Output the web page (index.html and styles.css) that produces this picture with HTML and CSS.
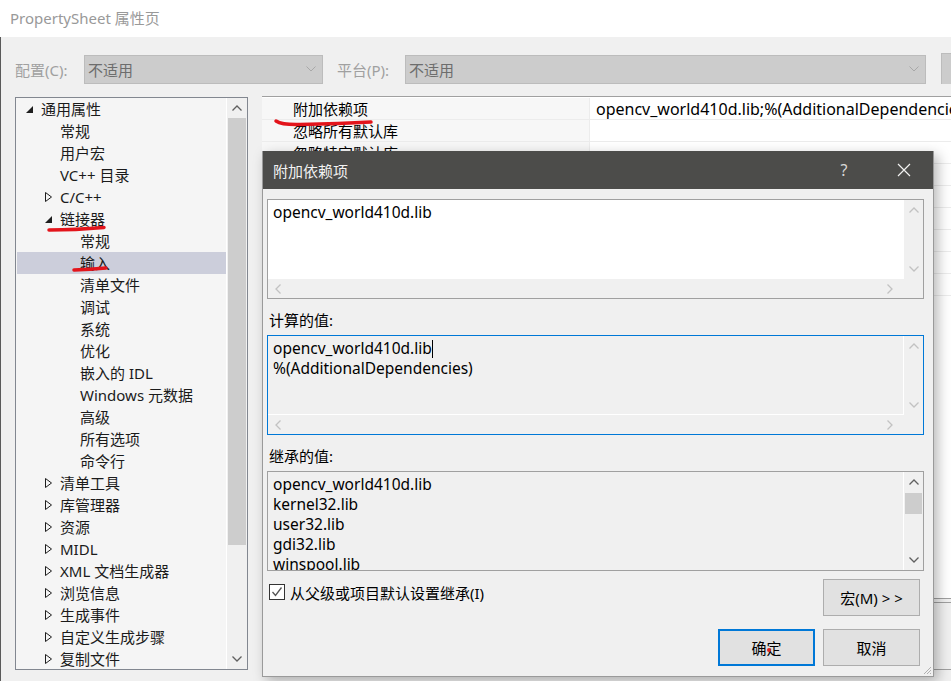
FILE: index.html
```html
<!DOCTYPE html>
<html lang="zh-CN">
  <head>
    <meta charset="UTF-8" />
    <meta name="viewport" content="width=device-width, initial-scale=1.0" />
    <title>PropertySheet 属性页</title>
    <link rel="stylesheet" href="styles.css">
  </head>
  <body>
    <div class="titlebar">PropertySheet 属性页</div>

    <div class="window">
      <div class="toolbar">
        <span class="label label-config">配置(C):</span>
        <div class="combo combo-config">
          <span>不适用</span>
          <svg class="chev" width="10" height="6"><polyline points="0.5,0.5 5,5 9.5,0.5" /></svg>
        </div>
        <span class="label label-platform">平台(P):</span>
        <div class="combo combo-platform">
          <span>不适用</span>
          <svg class="chev" width="10" height="6"><polyline points="0.5,0.5 5,5 9.5,0.5" /></svg>
        </div>
        <div class="manager-button"></div>
      </div>

      <div class="main">
        <div class="tree">
          <div class="tree-items">
            <div class="node l0"><span class="twist"><svg width="7" height="7"><path class="open" d="M7 0V7H0Z" /></svg></span>通用属性</div>
            <div class="node l1"><span class="twist"></span>常规</div>
            <div class="node l1"><span class="twist"></span>用户宏</div>
            <div class="node l1"><span class="twist"></span>VC++ 目录</div>
            <div class="node l1"><span class="twist"><svg width="7" height="10"><path class="shut" d="M0.5 0.5L6.5 5L0.5 9.5Z" /></svg></span>C/C++</div>
            <div class="node l1"><span class="twist"><svg width="7" height="7"><path class="open" d="M7 0V7H0Z" /></svg></span>链接器</div>
            <div class="node l2"><span class="twist"></span>常规</div>
            <div class="node l2 selected"><span class="twist"></span>输入</div>
            <div class="node l2"><span class="twist"></span>清单文件</div>
            <div class="node l2"><span class="twist"></span>调试</div>
            <div class="node l2"><span class="twist"></span>系统</div>
            <div class="node l2"><span class="twist"></span>优化</div>
            <div class="node l2"><span class="twist"></span>嵌入的 IDL</div>
            <div class="node l2"><span class="twist"></span>Windows 元数据</div>
            <div class="node l2"><span class="twist"></span>高级</div>
            <div class="node l2"><span class="twist"></span>所有选项</div>
            <div class="node l2"><span class="twist"></span>命令行</div>
            <div class="node l1"><span class="twist"><svg width="7" height="10"><path class="shut" d="M0.5 0.5L6.5 5L0.5 9.5Z" /></svg></span>清单工具</div>
            <div class="node l1"><span class="twist"><svg width="7" height="10"><path class="shut" d="M0.5 0.5L6.5 5L0.5 9.5Z" /></svg></span>库管理器</div>
            <div class="node l1"><span class="twist"><svg width="7" height="10"><path class="shut" d="M0.5 0.5L6.5 5L0.5 9.5Z" /></svg></span>资源</div>
            <div class="node l1"><span class="twist"><svg width="7" height="10"><path class="shut" d="M0.5 0.5L6.5 5L0.5 9.5Z" /></svg></span>MIDL</div>
            <div class="node l1"><span class="twist"><svg width="7" height="10"><path class="shut" d="M0.5 0.5L6.5 5L0.5 9.5Z" /></svg></span>XML 文档生成器</div>
            <div class="node l1"><span class="twist"><svg width="7" height="10"><path class="shut" d="M0.5 0.5L6.5 5L0.5 9.5Z" /></svg></span>浏览信息</div>
            <div class="node l1"><span class="twist"><svg width="7" height="10"><path class="shut" d="M0.5 0.5L6.5 5L0.5 9.5Z" /></svg></span>生成事件</div>
            <div class="node l1"><span class="twist"><svg width="7" height="10"><path class="shut" d="M0.5 0.5L6.5 5L0.5 9.5Z" /></svg></span>自定义生成步骤</div>
            <div class="node l1"><span class="twist"><svg width="7" height="10"><path class="shut" d="M0.5 0.5L6.5 5L0.5 9.5Z" /></svg></span>复制文件</div>
          </div>
          <div class="vscroll">
            <div class="sb-cell"><svg class="arrow dark" width="10" height="6"><polyline points="0.5,5.5 5,1 9.5,5.5" /></svg></div>
            <div class="sb-thumb tree-thumb"></div>
            <div class="sb-track"></div>
            <div class="sb-cell"><svg class="arrow dark" width="10" height="6"><polyline points="0.5,0.5 5,5 9.5,0.5" /></svg></div>
          </div>
        </div>

        <div class="grid">
          <div class="rows">
            <div class="row"><div class="pname">附加依赖项</div><div class="pval">opencv_world410d.lib;%(AdditionalDependencies)</div></div>
            <div class="row"><div class="pname">忽略所有默认库</div><div class="pval"></div></div>
            <div class="row"><div class="pname">忽略特定默认库</div><div class="pval"></div></div>
            <div class="row"><div class="pname">模块定义文件</div><div class="pval"></div></div>
            <div class="row"><div class="pname">将模块添加到程序集</div><div class="pval"></div></div>
            <div class="row"><div class="pname">嵌入托管资源文件</div><div class="pval"></div></div>
            <div class="row"><div class="pname">强制符号引用</div><div class="pval"></div></div>
            <div class="row"><div class="pname">延迟加载的 DLL</div><div class="pval"></div></div>
            <div class="row"><div class="pname">程序集链接资源</div><div class="pval"></div></div>
          </div>
          <div class="desc"></div>
        </div>
      </div>
    </div>

    <div class="dialog">
      <div class="dlg-title">
        <span class="dlg-caption">附加依赖项</span>
        <span class="dlg-help">?</span>
        <span class="dlg-close">
          <svg width="14" height="14"><path d="M1 1L13 13M13 1L1 13" /></svg>
        </span>
      </div>
      <div class="dlg-body">
        <div class="field editable">
          <div class="text">opencv_world410d.lib</div>
          <div class="vbar">
            <div class="sb-cell"><svg class="arrow" width="10" height="6"><polyline points="0.5,5.5 5,1 9.5,5.5" /></svg></div>
            <div class="sb-cell"><svg class="arrow" width="10" height="6"><polyline points="0.5,0.5 5,5 9.5,0.5" /></svg></div>
          </div>
          <div class="hbar">
            <div class="sb-hcell"><svg class="arrow" width="6" height="10"><polyline points="5.5,0.5 1,5 5.5,9.5" /></svg></div>
            <div class="sb-hcell"><svg class="arrow" width="6" height="10"><polyline points="0.5,0.5 5,5 0.5,9.5" /></svg></div>
          </div>
          <div class="corner"></div>
        </div>

        <div class="flabel">计算的值:</div>
        <div class="field readonly focused">
          <div class="text">opencv_world410d.lib<span class="caret"></span>
%(AdditionalDependencies)</div>
          <div class="vbar">
            <div class="sb-cell"><svg class="arrow" width="10" height="6"><polyline points="0.5,5.5 5,1 9.5,5.5" /></svg></div>
            <div class="sb-cell"><svg class="arrow" width="10" height="6"><polyline points="0.5,0.5 5,5 9.5,0.5" /></svg></div>
          </div>
          <div class="hbar">
            <div class="sb-hcell"><svg class="arrow" width="6" height="10"><polyline points="5.5,0.5 1,5 5.5,9.5" /></svg></div>
            <div class="sb-hcell"><svg class="arrow" width="6" height="10"><polyline points="0.5,0.5 5,5 0.5,9.5" /></svg></div>
          </div>
          <div class="corner"></div>
        </div>

        <div class="flabel">继承的值:</div>
        <div class="field readonly list">
          <div class="text">opencv_world410d.lib
kernel32.lib
user32.lib
gdi32.lib
winspool.lib
comdlg32.lib</div>
          <div class="vbar">
            <div class="sb-cell"><svg class="arrow dark" width="10" height="6"><polyline points="0.5,5.5 5,1 9.5,5.5" /></svg></div>
            <div class="sb-thumb list-thumb"></div>
            <div class="sb-track"></div>
            <div class="sb-cell"><svg class="arrow dark" width="10" height="6"><polyline points="0.5,0.5 5,5 9.5,0.5" /></svg></div>
          </div>
        </div>

        <div class="footer-row">
          <div class="inherit">
            <span class="check"><svg width="14" height="14"><polyline points="2.5,7 5.5,10.5 11.5,2.5" /></svg></span>
            <span>从父级或项目默认设置继承(I)</span>
          </div>
          <div class="btn">宏(M) &gt; &gt;</div>
        </div>
        <div class="footer-row buttons">
          <div class="btn default">确定<span class="dot"></span></div>
          <div class="btn">取消</div>
        </div>
      </div>
      <svg class="grip" width="10" height="10">
        <path d="M9 2L2 9M9 5L5 9M9 8L8 9" />
      </svg>
    </div>

    <!-- hand drawn red marks on top of the screenshot -->
    <svg class="marks" width="951" height="681">
      <path d="M49 230Q75 230 104 227.5" />
      <path d="M74 270Q90 269.5 106 268" />
      <path d="M276 121Q282 125 300 124.5Q340 123.5 371 122" />
    </svg>
  </body>
</html>
```

FILE: styles.css
```css
* {
  box-sizing: border-box;
}
body {
  margin: 0;
  width: 951px;
  height: 681px;
  overflow: hidden;
  position: relative;
  background: #f0f0f0;
  font-family: "Noto Sans", "Noto Sans CJK SC", sans-serif;
  font-size: 15px;
  color: #000;
}

.titlebar {
  height: 37px;
  background: #fff;
  padding-left: 10px;
  line-height: 36px;
  color: #999;
}

.window {
  height: 644px;
  border-left: 1px solid #5a5a5a;
}

/* config / platform bar */
.toolbar {
  display: flex;
  align-items: center;
  height: 47px;
  padding: 18px 0 0 14px;
  overflow: hidden;
}
.toolbar > * {
  flex-shrink: 0;
}
.label {
  color: #a0a0a0;
  line-height: 20px;
}
.label-config {
  width: 69px;
}
.label-platform {
  width: 68px;
  margin-left: 14px;
}
.combo {
  height: 29px;
  background: #cccccc;
  border: 1px solid #bcbcbc;
  display: flex;
  align-items: center;
  justify-content: space-between;
  padding: 0 6px 1px 3px;
  color: #6d6d6d;
}
.combo-config {
  width: 239px;
}
.combo-platform {
  width: 521px;
}
.chev polyline {
  fill: none;
  stroke: #a8a8a8;
  stroke-width: 1;
}
.manager-button {
  width: 30px;
  height: 33px;
  margin-left: 15px;
  background: #cccccc;
  border: 1px solid #bcbcbc;
}

.main {
  display: flex;
  align-items: flex-start;
  padding: 12px 0 0 14px;
}

/* tree */
.tree {
  width: 233px;
  height: 573px;
  margin-top: 1px;
  border: 1px solid #828790;
  background: #f5f5f5;
  display: flex;
  flex-shrink: 0;
}
.tree-items {
  flex: 1;
  padding-left: 1px;
  overflow: hidden;
}
.node {
  height: 22px;
  line-height: 22px;
  display: flex;
  align-items: center;
  white-space: nowrap;
  color: #1b1b1b;
}
.node.selected {
  background: #cccedb;
}
.twist {
  width: 15px;
  flex-shrink: 0;
  display: flex;
  align-items: center;
}
.twist svg {
  display: block;
}
.twist .open {
  fill: #1e1e1e;
}
.twist .shut {
  fill: none;
  stroke: #1e1e1e;
  stroke-width: 1;
}
.l0 {
  padding-left: 9px;
}
.l1 {
  padding-left: 28px;
}
.l2 {
  padding-left: 48px;
}

.vscroll {
  width: 21px;
  border-left: 1px solid #fff;
  background: #f0f0f0;
  display: flex;
  flex-direction: column;
}
.sb-cell {
  height: 20px;
  flex-shrink: 0;
  display: flex;
  align-items: center;
  justify-content: center;
}
.sb-thumb {
  background: #cdcdcd;
  margin: 0 1px;
  flex-shrink: 0;
}
.tree-thumb {
  height: 427px;
}
.sb-track {
  flex: 1;
}
.arrow polyline {
  fill: none;
  stroke: #c2c2c2;
  stroke-width: 1.3;
}
.arrow.dark polyline {
  stroke: #606060;
}

/* property grid */
.grid {
  flex: 1;
  margin-left: 14px;
  height: 574px;
  display: flex;
  flex-direction: column;
}
.rows {
  height: 503px;
  padding-top: 1px;
  background: #fff;
  border-top: 1px solid #a0a0a0;
  border-bottom: 1px solid #a0a0a0;
  overflow: hidden;
}
.row {
  display: flex;
  height: 22px;
  line-height: 22px;
  border-bottom: 1px solid #ececec;
}
.pname {
  width: 328px;
  flex-shrink: 0;
  padding-left: 31px;
  background: #f7f7f7;
  border-right: 1px solid #ececec;
  white-space: nowrap;
}
.pval {
  padding-left: 6px;
  font-size: 16px;
  white-space: nowrap;
  overflow: hidden;
}
.desc {
  margin-top: 3px;
  flex: 1;
  border-top: 1px solid #a0a0a0;
  border-bottom: 1px solid #a0a0a0;
}

/* modal dialog */
.dialog {
  position: absolute;
  left: 262px;
  top: 151px;
  width: 672px;
  height: 526px;
  background: #f0f0f0;
  border: 1px solid #9a9a9a;
  border-top: none;
  box-shadow: 4px 4px 12px rgba(0, 0, 0, 0.28);
}
.dlg-title {
  height: 38px;
  background: #4c4c4a;
  color: #f2f2f2;
  display: flex;
  align-items: center;
  padding-left: 10px;
}
.dlg-caption {
  flex: 1;
}
.dlg-help {
  width: 40px;
  text-align: center;
  margin-right: 17px;
  color: #d8d8d8;
  font-size: 16px;
}
.dlg-close {
  width: 46px;
  margin-right: 6px;
  display: flex;
  justify-content: center;
}
.dlg-close path {
  stroke: #f2f2f2;
  stroke-width: 1.2;
}
.dlg-body {
  padding: 10px 9px 0 4px;
}

.field {
  height: 100px;
  border: 1px solid #a0a0a0;
  display: grid;
  grid-template-columns: 1fr 19px;
  grid-template-rows: 1fr 19px;
}
.field.focused {
  border-color: #0078d7;
}
.field.list {
  grid-template-rows: 1fr;
}
.text {
  background: #fff;
  padding: 2px 5px;
  line-height: 20px;
  font-size: 15.5px;
  white-space: pre;
  overflow: hidden;
}
.readonly .text {
  background: #f0f0f0;
  border-right: 1px solid #fff;
}
.readonly.focused .text {
  border-bottom: 1px solid #fff;
}
.caret {
  display: inline-block;
  width: 1px;
  height: 18px;
  background: #000;
  vertical-align: -4px;
}
.vbar {
  display: flex;
  flex-direction: column;
  justify-content: space-between;
}
.list .vbar {
  justify-content: flex-start;
}
.list-thumb {
  height: 21px;
  margin-top: 1px;
}
.hbar {
  display: flex;
  justify-content: space-between;
  padding-right: 4px;
}
.sb-hcell {
  width: 20px;
  display: flex;
  align-items: center;
  justify-content: center;
}
.corner {
  background: #f0f0f0;
}

.flabel {
  height: 36px;
  padding: 11px 0 0 2px;
  line-height: 20px;
}

.footer-row {
  display: flex;
  justify-content: space-between;
  margin-top: 8px;
  padding-right: 4px;
}
.footer-row.buttons {
  justify-content: flex-end;
  gap: 8px;
  margin-top: 13px;
}
.inherit {
  display: flex;
  align-items: center;
  height: 22px;
  margin-top: 2px;
  padding-left: 2px;
}
.check {
  width: 16px;
  height: 16px;
  border: 1px solid #333;
  background: #fff;
  margin-right: 5px;
  display: flex;
  align-items: center;
  justify-content: center;
}
.check polyline {
  fill: none;
  stroke: #555;
  stroke-width: 1.3;
}
.btn {
  width: 97px;
  height: 37px;
  background: #e1e1e1;
  border: 1px solid #adadad;
  display: flex;
  align-items: center;
  justify-content: center;
  position: relative;
}
.btn.default {
  border: 2px solid #0078d7;
}
.dot {
  position: absolute;
  left: 47px;
  top: 17px;
  width: 4px;
  height: 4px;
  border-radius: 50%;
  background: #e0201c;
}
.grip {
  position: absolute;
  right: 1px;
  bottom: 1px;
}
.grip path {
  stroke: #b0b0b0;
  stroke-width: 1;
}

.marks {
  position: absolute;
  left: 0;
  top: 0;
  pointer-events: none;
}
.marks path {
  fill: none;
  stroke: #e3141b;
  stroke-width: 3.5;
  stroke-linecap: round;
}
```
